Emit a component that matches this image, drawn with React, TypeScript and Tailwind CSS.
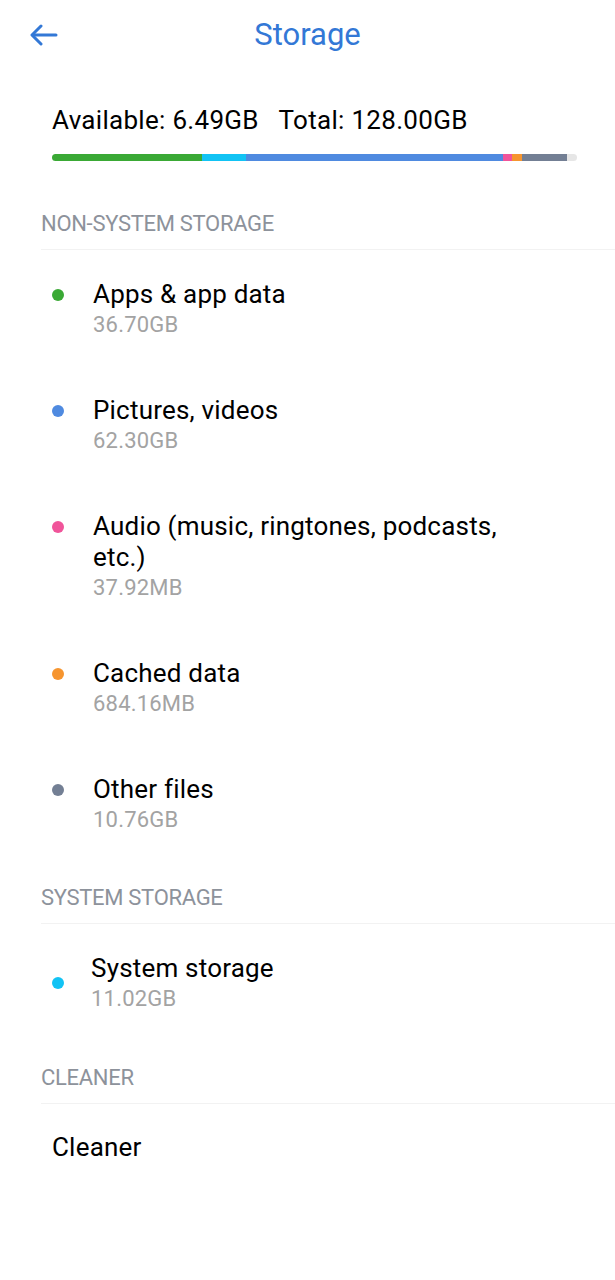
import React from "react"

interface StorageItem {
  label: string
  size: string
  color: string
}

const segments = [
  { color: "bg-[#3aa935]", width: 150 },
  { color: "bg-[#12c3f4]", width: 44 },
  { color: "bg-[#4f8ae0]", width: 257 },
  { color: "bg-[#f0549a]", width: 9 },
  { color: "bg-[#f6952f]", width: 10 },
  { color: "bg-[#737f94]", width: 45 },
  { color: "bg-[#e6e6e6]", width: 10 },
]

const nonSystem: StorageItem[] = [
  { label: "Apps & app data", size: "36.70GB", color: "bg-[#3aa935]" },
  { label: "Pictures, videos", size: "62.30GB", color: "bg-[#4f8ae0]" },
  { label: "Audio (music, ringtones, podcasts, etc.)", size: "37.92MB", color: "bg-[#f0549a]" },
  { label: "Cached data", size: "684.16MB", color: "bg-[#f6952f]" },
  { label: "Other files", size: "10.76GB", color: "bg-[#737f94]" },
]

function SectionHeader({ title }: { title: string }) {
  return (
    <div className="ml-[41px] border-b border-[#f2f2f2] pb-[12px]">
      <div className="text-[22px] leading-[26px] text-[#8d929b] tracking-[-0.3px]">{title}</div>
    </div>
  )
}

function ItemRow({ item }: { item: StorageItem }) {
  return (
    <div className="flex pl-[52px] pr-[100px] pt-[29px] pb-[28px]">
      <div className="w-[41px] shrink-0 flex items-center h-[31px]">
        <span className={`block w-[12px] h-[12px] rounded-full ${item.color}`} />
      </div>
      <div className="flex flex-col">
        <div className="text-[26px] leading-[31px] tracking-[0.2px] text-black">{item.label}</div>
        <div className="text-[22px] leading-[26px] mt-[2px] tracking-[0.2px] text-[#a3a3a3]">{item.size}</div>
      </div>
    </div>
  )
}

export default function App() {
  return (
    <div className="w-[615px] min-h-[1280px] bg-white font-['Roboto',sans-serif] overflow-hidden">
      <div className="grid grid-cols-[1fr_auto_1fr] items-center h-[70px]">
        <div className="pl-[30px]">
          <svg width="28" height="22" viewBox="0 0 28 22" fill="none" stroke="#3378d6" strokeWidth="3" strokeLinecap="round" strokeLinejoin="round">
            <path d="M26 11H3" />
            <path d="M11 2L2 11l9 9" />
          </svg>
        </div>
        <h1 className="text-[31px] leading-[36px] text-[#3378d6]">Storage</h1>
        <div />
      </div>

      <div className="px-[52px] pt-[34px]">
        <div className="text-[26px] leading-[32px] tracking-[0.3px] text-black whitespace-pre">Available: 6.49GB   Total: 128.00GB</div>
        <div className="flex h-[7px] mt-[18px] w-[525px] rounded-full overflow-hidden">
          {segments.map((s, i) => (
            <div key={i} className={`h-full ${s.color}`} style={{ width: s.width }} />
          ))}
        </div>
      </div>

      <div className="mt-[50px]">
        <SectionHeader title="NON-SYSTEM STORAGE" />
        {nonSystem.map((item) => (
          <ItemRow key={item.label} item={item} />
        ))}
      </div>

      <div className="mt-[24px]">
        <SectionHeader title="SYSTEM STORAGE" />
        <div className="flex items-center pl-[52px] pt-[29px] pb-[28px]">
          <div className="w-[39px] shrink-0 flex items-center">
            <span className="block w-[12px] h-[12px] rounded-full bg-[#12c3f4]" />
          </div>
          <div className="flex flex-col">
            <div className="text-[26px] leading-[31px] tracking-[0.2px] text-black">System storage</div>
            <div className="text-[22px] leading-[26px] mt-[2px] tracking-[0.2px] text-[#a3a3a3]">11.02GB</div>
          </div>
        </div>
      </div>

      <div className="mt-[25px]">
        <SectionHeader title="CLEANER" />
        <div className="pl-[52px] pt-[28px] pb-[28px]">
          <div className="text-[26px] leading-[31px] tracking-[0.2px] text-black">Cleaner</div>
        </div>
      </div>
    </div>
  )
}
